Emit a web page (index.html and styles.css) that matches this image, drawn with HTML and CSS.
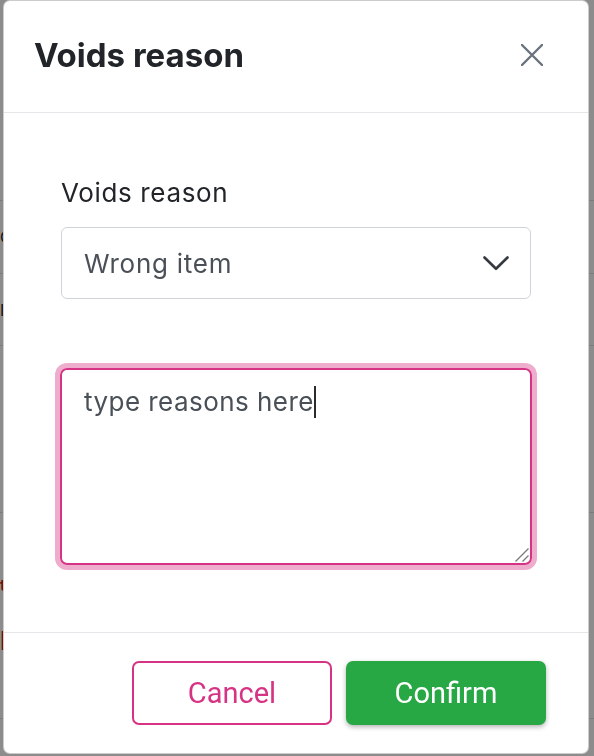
FILE: index.html
```html
<!DOCTYPE html>
<html lang="en">
<head>
<meta charset="utf-8">
<title>Voids reason</title>
<link rel="stylesheet" href="styles.css">
</head>
<body>
<div class="page">
  <div class="row r1"></div>
  <div class="row r2"><span class="cell">Order</span></div>
  <div class="row r3"><span class="cell">Item</span></div>
  <div class="row r4"></div>
  <div class="row r5"><span class="cell red">tt</span><span class="cell red big">I</span></div>
</div>
<div class="backdrop"></div>
<div class="modal" role="dialog">
  <div class="modal-header">
    <h2 class="modal-title">Voids reason</h2>
    <button class="close" aria-label="Close">
      <svg width="22" height="22" viewBox="0 0 22 22"><path d="M1 1L21 21M21 1L1 21" stroke="#69737d" stroke-width="2.4" stroke-linecap="round" fill="none"/></svg>
    </button>
  </div>
  <div class="modal-body">
    <label class="form-label">Voids reason</label>
    <div class="select">
      <span>Wrong item</span>
      <svg class="chev" width="26" height="15" viewBox="0 0 26 15"><path d="M1.5 1.5L13 12.8L24.5 1.5" stroke="#343a40" stroke-width="2.6" stroke-linecap="round" stroke-linejoin="round" fill="none"/></svg>
    </div>
    <div class="textarea">
      <span class="value">type reasons here</span><span class="caret"></span>
      <svg class="grip" width="16" height="16" viewBox="0 0 16 16"><path d="M1.5 14.5L14.5 1.5M8.5 14.5L14.5 8.5" stroke="#7a7a7a" stroke-width="1.3" fill="none"/></svg>
    </div>
  </div>
  <div class="modal-footer">
    <button class="btn btn-cancel">Cancel</button>
    <button class="btn btn-confirm">Confirm</button>
  </div>
</div>
</body>
</html>
```

FILE: styles.css
```css
* { box-sizing: border-box; }
html, body { margin: 0; height: 100%; }
body {
  font-family: Inter, "Noto Sans", sans-serif;
  background: #fff;
  overflow: hidden;
  color: #212529;
}

/* underlying page */
.page { display: flex; flex-direction: column; }
.row {
  border-bottom: 1px solid #dee2e6;
  display: flex;
  flex-direction: column;
  justify-content: center;
  font-size: 16px;
  padding-left: 0;
}
.r1 { height: 201px; }
.r2 { height: 73px; }
.r3 { height: 72px; }
.r4 { height: 167px; }
.r5 { height: 206px; gap: 30px; }
.cell { display: block; }
.red { color: #d41e1e; font-weight: 700; }
.big { font-size: 26px; }

.backdrop {
  position: fixed;
  inset: 0;
  background: rgba(0, 0, 0, 0.45);
}

/* modal */
.modal {
  position: fixed;
  left: 3px;
  top: 0;
  width: 586px;
  height: 754px;
  background: #fff;
  border: 1px solid rgba(0, 0, 0, 0.2);
  border-radius: 7px;
  display: flex;
  flex-direction: column;
  overflow: hidden;
}
.modal-header {
  height: 112px;
  flex: none;
  padding: 0 45px 3px 30px;
  display: flex;
  align-items: center;
  justify-content: space-between;
  border-bottom: 1px solid #e4e6ea;
}
.modal-title {
  margin: 0;
  font-size: 33px;
  font-weight: 700;
  color: #212529;
  letter-spacing: 0;
}
.close {
  border: 0;
  background: none;
  padding: 0;
  width: 22px;
  height: 22px;
  display: flex;
}

.modal-body {
  flex: 1;
  padding: 60px 57px 0 57px;
  display: flex;
  flex-direction: column;
}
.form-label {
  font-size: 26px;
  line-height: 39px;
  letter-spacing: 0.65px;
  color: #212529;
  margin-bottom: 15px;
}
.select {
  height: 72px;
  border: 1px solid #ced4da;
  border-radius: 6px;
  display: flex;
  align-items: center;
  justify-content: space-between;
  padding: 0 21px 0 22px;
  font-size: 26px;
  letter-spacing: 0.75px;
  color: #495057;
}
.chev { display: block; }

.textarea {
  position: relative;
  margin: 69px -1px 0;
  height: 197px;
  border: 2px solid #d63384;
  border-radius: 7px;
  box-shadow: 0 0 0 5px rgba(214, 51, 132, 0.4);
  padding: 12px 22px;
  font-size: 26px;
  line-height: 39px;
  letter-spacing: 0.45px;
  color: #495057;
}
.caret {
  display: inline-block;
  width: 2px;
  height: 32px;
  background: #2b2b2b;
  vertical-align: -7px;
}
.grip {
  position: absolute;
  right: 0;
  bottom: 0;
}

.modal-footer {
  flex: none;
  height: 121px;
  border-top: 1px solid #e4e6ea;
  display: flex;
  align-items: center;
  justify-content: flex-end;
  gap: 14px;
  padding: 0 42px 0 0;
}
.btn {
  width: 200px;
  height: 64px;
  border-radius: 7px;
  font-family: Roboto, Inter, sans-serif;
  font-size: 29px;
  cursor: pointer;
}
.btn-cancel {
  background: #fff;
  border: 2px solid #d63384;
  color: #d63384;
}
.btn-confirm {
  background: #28a745;
  border: 0;
  color: #fff;
  box-shadow: 0 2px 5px rgba(0, 0, 0, 0.3);
}
```
